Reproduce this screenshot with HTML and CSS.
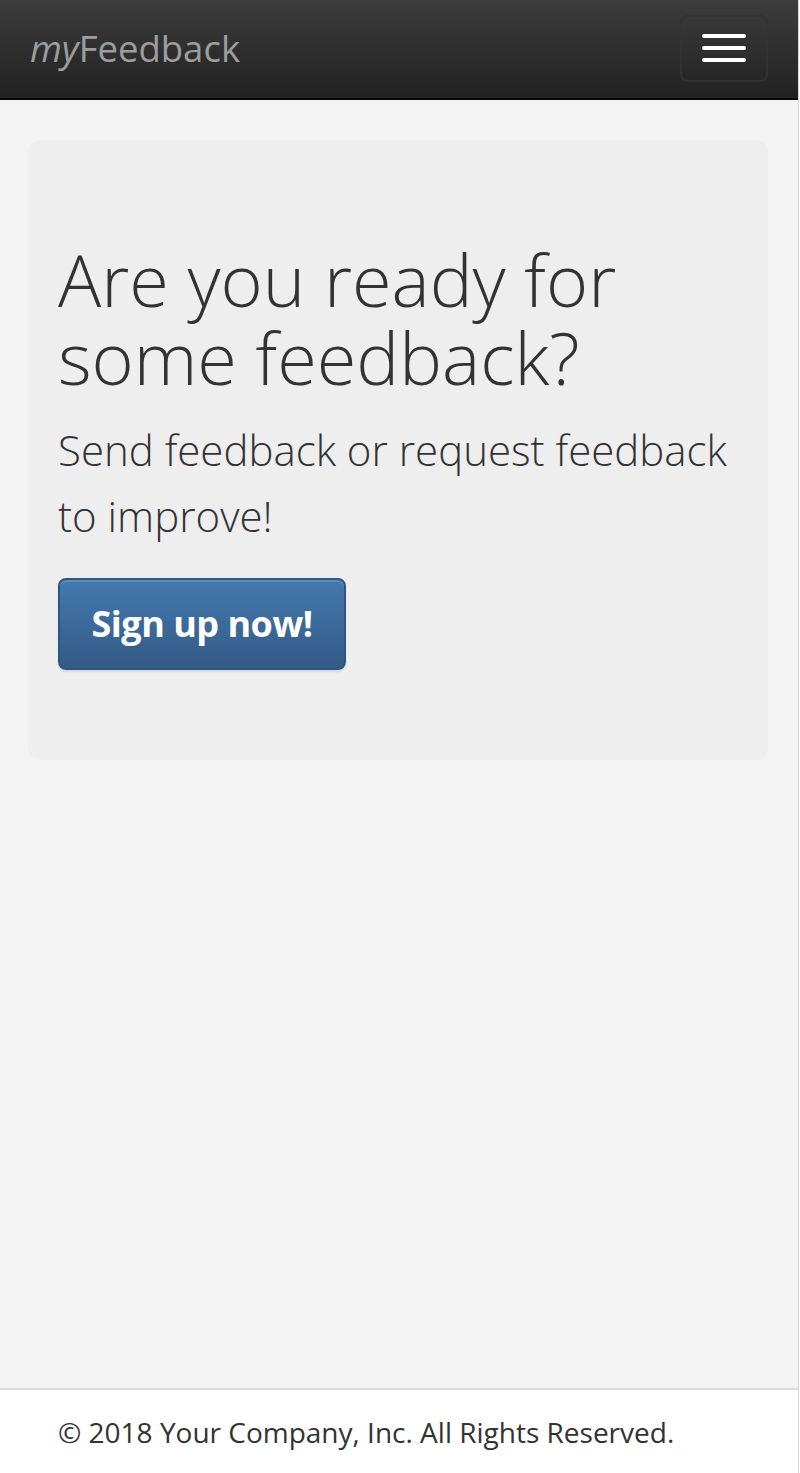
FILE: index.html
```html
<!DOCTYPE html>
<html lang="en">
<head>
<meta charset="utf-8">
<title>myFeedback</title>
<link rel="stylesheet" href="styles.css">
</head>
<body>
<div class="page">
  <nav class="navbar">
    <a class="brand" href="#"><em>my</em>Feedback</a>
    <button class="toggle" type="button" aria-label="Toggle navigation">
      <span class="bar"></span>
      <span class="bar"></span>
      <span class="bar"></span>
    </button>
  </nav>
  <main class="main">
    <section class="jumbotron">
      <h1 class="title">Are you ready for some feedback?</h1>
      <p class="lead">Send feedback or request feedback to improve!</p>
      <a class="btn-primary" href="#">Sign up now!</a>
    </section>
  </main>
  <footer class="footer">
    <p class="copy">© 2018 Your Company, Inc. All Rights Reserved.</p>
  </footer>
</div>
</body>
</html>
```

FILE: styles.css
```css
html, body {
  margin: 0;
  padding: 0;
  background: #ffffff;
}

body {
  font-family: "Open Sans", "Liberation Sans", sans-serif;
  color: #333333;
}

.page {
  width: 798px;
  min-height: 1473px;
  border-right: 1px solid #d8d8d8;
  display: flex;
  flex-direction: column;
  background: #f3f3f3;
}

.navbar {
  height: 98px;
  border-bottom: 2px solid #080808;
  background: linear-gradient(to bottom, #3c3c3c 0%, #222222 100%);
  display: flex;
  align-items: center;
  justify-content: space-between;
  padding: 0 30px;
}

.brand {
  font-size: 36.5px;
  color: #9d9d9d;
  text-decoration: none;
  margin-top: -2px;
}

.brand em {
  font-style: italic;
}

.toggle {
  width: 88px;
  height: 67px;
  box-sizing: border-box;
  border: 2px solid #333333;
  border-radius: 8px;
  background: transparent;
  display: flex;
  flex-direction: column;
  align-items: center;
  justify-content: center;
  gap: 8px;
  padding: 0;
  margin-top: -2px;
}

.bar {
  display: block;
  width: 44px;
  height: 4px;
  border-radius: 2px;
  background: #ffffff;
}

.main {
  flex: 1;
  padding: 40px 30px 0 28px;
}

.jumbotron {
  background: #eeeeee;
  border-radius: 12px;
  padding: 100px 30px 90px;
}

.title {
  margin: 0;
  font-size: 72px;
  line-height: 78px;
  font-weight: 300;
  color: #333333;
}

.lead {
  margin: 21px 0 0;
  font-size: 42px;
  line-height: 66px;
  font-weight: 300;
  color: #333333;
}

.btn-primary {
  display: inline-block;
  margin-top: 29px;
  width: 288px;
  height: 92px;
  box-sizing: border-box;
  border: 2px solid #2b5685;
  border-radius: 8px;
  background: linear-gradient(to bottom, #4479ae 0%, #335a86 100%);
  box-shadow: inset 0 2px 0 rgba(255, 255, 255, 0.15), 0 2px 2px rgba(0, 0, 0, 0.08);
  color: #ffffff;
  font-size: 36px;
  font-weight: 700;
  line-height: 88px;
  text-align: center;
  text-decoration: none;
  letter-spacing: -0.5px;
}

.footer {
  border-top: 2px solid #dddddd;
  background: #ffffff;
  height: 83px;
  padding: 0 58px;
  display: flex;
  align-items: center;
}

.copy {
  margin: 0;
  font-size: 28px;
  color: #333333;
}
```
